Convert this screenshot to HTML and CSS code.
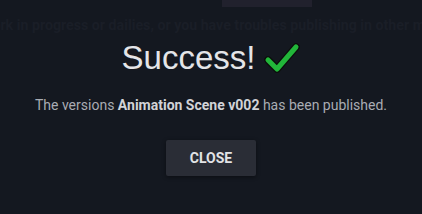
FILE: index.html
```html
<!DOCTYPE html>
<html>
<head>
<meta charset="utf-8">
<link rel="stylesheet" href="styles.css">
</head>
<body>
<div class="page">
  <div class="back">
    <div class="back-btn-row"><div class="back-btn"></div></div>
    <p class="back-text">work in progress or dailies, or you have troubles publishing in other modules</p>
  </div>
  <div class="overlay">
    <div class="dialog">
      <h1 class="title">Success!<svg class="check" width="36" height="34" viewBox="0 0 36 34"><path d="M4 19 L13 28 L32 6" fill="none" stroke="#0b0f0b" stroke-width="7.5" stroke-linecap="round" stroke-linejoin="round"/><path d="M4 19 L13 28 L32 6" fill="none" stroke="#22b63a" stroke-width="5" stroke-linecap="round" stroke-linejoin="round"/></svg></h1>
      <p class="msg">The versions <b>Animation Scene v002</b> has been published.</p>
      <button class="close">CLOSE</button>
    </div>
  </div>
</div>
</body>
</html>
```
FILE: styles.css
```css
html, body {
  margin: 0;
  padding: 0;
  background: #141820;
}
.page {
  position: relative;
  width: 422px;
  height: 214px;
  overflow: hidden;
  font-family: Roboto, "Liberation Sans", sans-serif;
}
.back {
  display: flex;
  flex-direction: column;
}
.back-btn-row {
  display: flex;
  padding-left: 222px;
}
.back-btn {
  width: 90px;
  height: 7px;
  background: #21212d;
}
.back-text {
  margin: 10px 0 0 -18px;
  white-space: nowrap;
  font-size: 14.2px;
  font-weight: 700;
  color: #1a1e27;
}
.overlay {
  position: absolute;
  inset: 0;
  display: flex;
  justify-content: center;
}
.dialog {
  display: flex;
  flex-direction: column;
  align-items: center;
  padding-top: 38px;
}
.title {
  margin: 0;
  display: flex;
  align-items: center;
  gap: 9px;
  font-family: "Liberation Sans", Arial, sans-serif;
  font-weight: 400;
  font-size: 33px;
  line-height: 39px;
  color: #e4e5e8;
}
.check {
  display: block;
}
.msg {
  margin: 19px 0 0;
  font-size: 14px;
  line-height: 18px;
  color: #a9acb3;
}
.msg b {
  font-weight: 700;
  color: #d2d3d7;
}
.close {
  margin-top: 26px;
  width: 90px;
  height: 36px;
  border: none;
  border-radius: 2px;
  background: #2a2d36;
  box-shadow: 0 1px 4px rgba(0,0,0,0.45);
  font-family: Roboto, "Liberation Sans", sans-serif;
  font-size: 14px;
  font-weight: 700;
  color: #e2e3e6;
  padding: 0;
}
```
